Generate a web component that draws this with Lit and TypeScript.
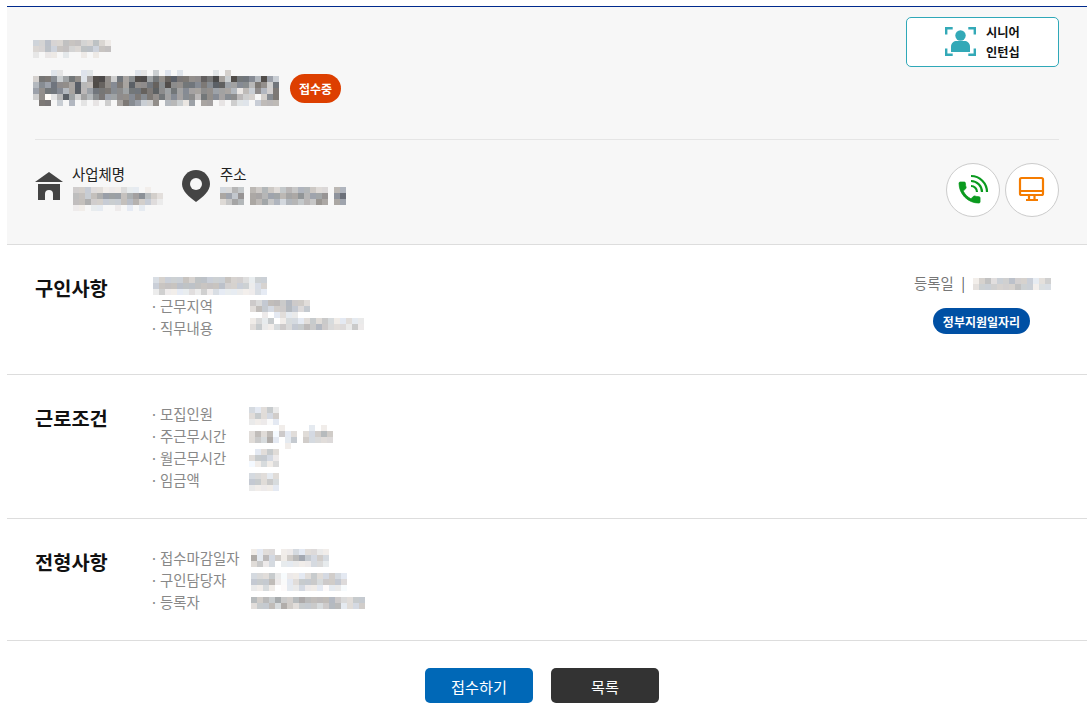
import { LitElement, html, css, svg } from "lit";
import { customElement, property } from "lit/decorators.js";

const TINTS = [[0, 0, 0], [6, 2, -2], [-5, 0, 6], [3, 0, 0], [-3, 1, 3], [7, 3, 0], [-6, -1, 8]];

@customElement("blur-block")
class BlurBlock extends LitElement {
  static styles = css`
    :host { display: block; line-height: 0; }
    svg { display: block; overflow: visible; }
  `;
  @property({ type: Array }) rows: string[] = [];
  @property({ type: Number }) dx = 0;
  @property({ type: Number }) dy = 0;
  @property({ type: Number }) step = 19;
  render() {
    const cell = 6;
    const cols = Math.max(...this.rows.map((r) => r.length));
    const rects = this.rows.flatMap((row, y) =>
      [...row].map((c, x) => {
        if (c === ".") return null;
        const v = 250 - Number(c) * this.step;
        const t = TINTS[(x * 5 + y * 3 + Number(c)) % TINTS.length];
        return svg`<rect x=${x * cell} y=${y * cell} width=${cell} height=${cell} fill="rgb(${v + t[0]},${v + t[1]},${v + t[2]})"/>`;
      })
    );
    return html`<svg width=${cols * cell} height=${this.rows.length * cell} shape-rendering="crispEdges"
      style="margin-left:${this.dx}px;margin-top:${this.dy}px">${rects}</svg>`;
  }
}

interface Row { label: string; rows: string[]; dy: number; dx: number; }

const SEC1: Row[] = [
  { label: "근무지역", dy: 5, dx: 0, rows: ["3234434332", "2432334323", "..1.1211.."] },
  { label: "직무내용", dy: 1, dx: 0, rows: ["1213.12212323211211", "2311232334343222131", "1111112222323221111"].slice(0, 2) },
];
const SEC2: Row[] = [
  { label: "모집인원", dy: 4, dx: -1, rows: ["21231", "23223", "11101"] },
  { label: "주근무시간", dy: 0, dx: -1, rows: [".....1....1.1.", "24240312.22343", "23251.13.32222", "......1......."] },
  { label: "월근무시간", dy: 2, dx: -1, rows: [".1232", "23321", "01212"] },
  { label: "임금액", dy: 4, dx: -1, rows: ["22212", "33232", "11111"] },
];
const SEC3: Row[] = [
  { label: "접수마감일자", dy: 2, dx: 1, rows: ["1122.11212211", "5142313453232", "2312.11111221"] },
  { label: "구인담당자", dy: 4, dx: 1, rows: ["2223101112322321", "3334101233323332", "1121.01121110110"] },
  { label: "등록자", dy: 6, dx: 1, rows: ["4343533454444432233", "2334253233323441223"] },
];

@customElement("info-section")
class InfoSection extends LitElement {
  static styles = css`
    :host { display: flex; border-bottom: 1px solid #ddd; padding: 28px 28px 27px; font-family: "Noto Sans CJK KR", "Noto Sans", sans-serif; }
    .title { width: 117px; flex: none; font-size: 19.8px; font-weight: 700; line-height: 30px; color: #111; }
    .list { display: flex; flex-direction: column; flex: 1; }
    .row { display: flex; height: 22px; font-size: 14.4px; line-height: 21px; color: #888; }
    .label { width: 98px; flex: none; white-space: nowrap; }
    .dot { display: inline-block; width: 10px; margin-left: -2px; }
  `;
  @property() heading = "";
  @property({ type: Array }) items: Row[] = [];
  render() {
    return html`<div class="title">${this.heading}</div>
      <div class="list">
        <slot></slot>
        ${this.items.map(
          (r) => html`<div class="row"><div class="label"><span class="dot">·</span>${r.label}</div>
            <blur-block .rows=${r.rows} .dx=${r.dx} .dy=${r.dy} .step=${16}></blur-block></div>`
        )}
      </div>`;
  }
}

@customElement("app-root")
class AppRoot extends LitElement {
  static styles = css`
    :host { display: block; font-family: "Noto Sans CJK KR", "Noto Sans", sans-serif; color: #222; background: #fff; }
    .page { width: 1080px; margin-left: 7px; padding-top: 6px; }
    .rule { height: 1px; background: #002a8d; }
    .hero { background: #f7f7f7; border-bottom: 1px solid #ddd; padding: 0 28px; height: 237px; }
    .top { display: flex; justify-content: space-between; height: 133px; border-bottom: 1px solid #e5e5e5; padding-top: 10px; box-sizing: border-box; }
    .lead { padding-top: 23px; margin-left: -2px; }
    .name { display: flex; align-items: center; gap: 11px; margin-top: 12px; }
    .state { display: flex; align-items: center; justify-content: center; width: 51px; height: 29px; margin-top: 1px; border-radius: 15px; background: #dd3f00; color: #fff; font-size: 12px; font-weight: 700; }
    .senior { display: flex; align-items: flex-start; width: 153px; height: 50px; box-sizing: border-box; border: 1px solid #2fa8b8; border-radius: 5px; background: #fff; padding: 8px 0 0 38px; gap: 10px; }
    .senior svg { display: block; }
    .senior div { font-size: 12.2px; font-weight: 700; line-height: 20px; color: #111; margin-top: -4px; }
    .meta { display: flex; justify-content: space-between; padding-top: 23px; }
    .places { display: flex; gap: 19px; }
    .place { display: flex; }
    .place svg { display: block; flex: none; }
    .home { margin: 9px 9px 0 0; }
    .pin { margin: 7px 10px 0 0; }
    .place .text { padding-top: 2px; min-width: 88px; }
    .cap { font-size: 14.4px; line-height: 18px; color: #222; }
    .place blur-block { margin-top: 4px; }
    .tool { display: flex; gap: 5px; }
    .circle { width: 54px; height: 54px; border: 1px solid #ccc; box-sizing: border-box; border-radius: 50%; background: #fff; display: block; }
    .circle svg { display: block; margin: -1px; }
    .sec-wrap { position: relative; }
    .s1 { padding-bottom: 35px; }
    .posted { position: absolute; top: 25px; right: 35px; width: 138px; display: flex; flex-direction: column; align-items: flex-start; }
    .posted-line { display: flex; font-size: 14.4px; line-height: 26px; color: #777; }
    .sep { width: 19px; flex: none; text-align: center; color: #555; }
    .posted-line blur-block { margin-top: 8px; }
    .gov { margin: 12px 0 0 19px; width: 97px; height: 26px; border-radius: 13px; background: #0050a4; color: #fff; font-size: 12px; font-weight: 700; display: flex; align-items: center; justify-content: center; }
    .first { height: 22px; margin-left: 1px; }
    .actions { display: flex; justify-content: center; gap: 18px; padding: 27px 10px 0 0; }
    .btn { width: 108px; height: 35px; border: 0; border-radius: 5px; color: #fff; font: 400 15.2px "Noto Sans CJK KR", sans-serif; }
    .apply { background: #0068b7; }
    .back { background: #333; }
  `;
  render() {
    return html`<div class="page">
      <div class="rule"></div>
      <section class="hero">
        <div class="top">
          <div class="lead">
            <blur-block .rows=${["2232233322321", "2232332233233", "1.11.1..1.1.."]}></blur-block>
            <div class="name">
              <blur-block .step=${22} .rows=${[
                "...11...11.......11.2.1.1.....1.2........",
                "26652465148852645884657766557684286653842",
                "35465547338755647556758556656577445536526",
                "45665347346665546676754645445544431325326",
                "2501374243564455565656454553655455322.256",
                ".66.2.3.1.1.2.4654225.33214.44.1.211.2333",
              ]}></blur-block>
              <span class="state">접수중</span>
            </div>
          </div>
          <div class="senior">
            <svg width="31" height="31" viewBox="0 0 31 31" fill="none">
              <path d="M1.200 8.500V2.200h6.500M23.300 2.200h6.500v6.300M1.200 22.500v6.300h6.500M23.300 28.800h6.500v-6.300" stroke="#33a9b7" stroke-width="2.400"/>
              <circle cx="15.5" cy="9.500" r="5.200" fill="#33a9b7"/>
              <path d="M6 26v-5.500c0-3.500 3-5.500 5.500-5.500h8c2.500 0 5.500 2 5.500 5.500V26z" fill="#33a9b7"/>
            </svg>
            <div>시니어<br />인턴십</div>
          </div>
        </div>
        <div class="meta">
          <div class="places">
            <div class="place">
              <svg class="home" width="28" height="28" viewBox="0 0 28 28">
                <path d="M14 0 28 10H0z" fill="#444"/>
                <path d="M3 12h22v16h-7v-6a4 4 0 0 0-8 0v6H3z" fill="#444"/>
              </svg>
              <div class="text">
                <div class="cap">사업체명</div>
                <blur-block .step=${15} .dx=${1} .rows=${["33322111211.1.", "443456664567432", "445333334453321", "11.11..1.1.1.."]}></blur-block>
              </div>
            </div>
            <div class="place">
              <svg class="pin" width="28" height="32" viewBox="0 0 28 32">
                <path d="M14 0C6.300 0 0 6.200 0 14c0 7 7 13 14 18 7-5 14-11 14-18C28 6.200 21.700 0 14 0z" fill="#444"/>
                <circle cx="14" cy="14" r="6" fill="#f7f7f7"/>
              </svg>
              <div class="text">
                <div class="cap">주소</div>
                <blur-block .step=${17} .rows=${["2243.4343234344322.44.", "5536.5545545564556.68.", "2354.5453424434365.55."]}></blur-block>
              </div>
            </div>
          </div>
          <div class="tool">
            <a class="circle">
              <svg width="54" height="54" viewBox="0 0 54 54" fill="none">
                <path transform="translate(9.500 15.500) scale(1.17)" fill="#0a9a1e" stroke="#0a9a1e" stroke-width="0.6" d="M6.620 10.790c1.440 2.830 3.760 5.140 6.590 6.590l2.200-2.200c.27-.27.67-.36 1.020-.24 1.120.37 2.330.57 3.570.57.550 0 1 .45 1 1V20c0 .55-.45 1-1 1-9.390 0-17-7.610-17-17 0-.55.45-1 1-1h3.500c.55 0 1 .45 1 1 0 1.250.2 2.450.57 3.570.11.35.03.74-.25 1.020l-2.200 2.200z"/>
                <path d="M25 13a16 16 0 0 1 16 16M25 18a11 11 0 0 1 11 11M25 23a6 6 0 0 1 6 6" stroke="#0a9a1e" stroke-width="2.200"/>
              </svg>
            </a>
            <a class="circle">
              <svg width="54" height="54" viewBox="0 0 54 54" fill="none" stroke="#f57c00" stroke-width="2.200">
                <rect x="15" y="15" width="23" height="17" rx="1.500"/>
                <path d="M15 28h23M24 32v5M29.500 32v5M21 37h12"/>
              </svg>
            </a>
          </div>
        </div>
      </section>

      <div class="sec-wrap">
        <info-section class="s1" heading="구인사항" .items=${SEC1}>
          <div class="first"><blur-block .step=${14} .dy=${4} .rows=${["2333343443334332133", "3444444444443333123", "1311112131211111121"]}></blur-block></div>
        </info-section>
        <div class="posted">
          <div class="posted-line">등록일<span class="sep">|</span><blur-block .step=${14} .rows=${["1342334333123", "2333333433122"]}></blur-block></div>
          <div class="gov">정부지원일자리</div>
        </div>
      </div>
      <info-section heading="근로조건" .items=${SEC2}></info-section>
      <info-section heading="전형사항" .items=${SEC3}></info-section>

      <div class="actions">
        <button class="btn apply">접수하기</button>
        <button class="btn back">목록</button>
      </div>
    </div>`;
  }
}
